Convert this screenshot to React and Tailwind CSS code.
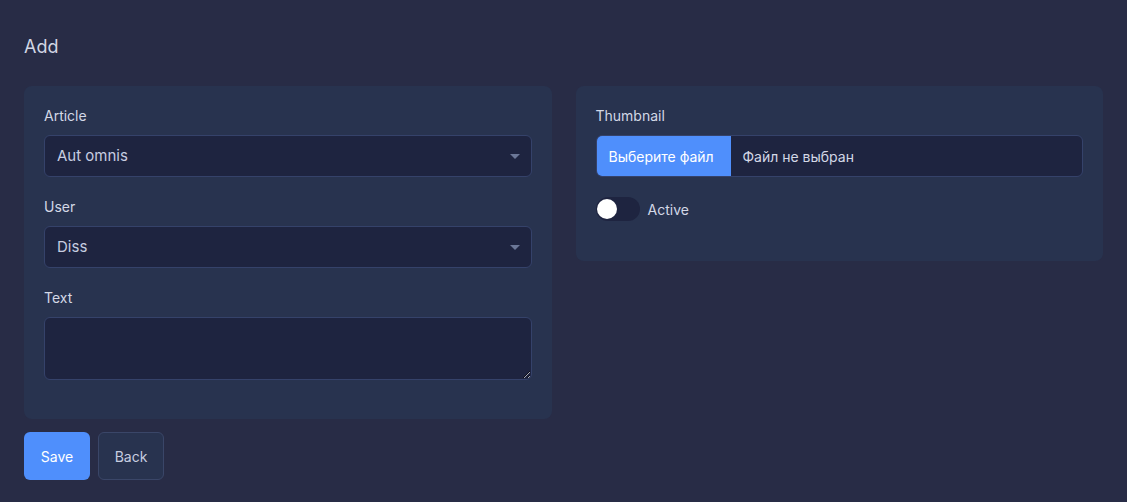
import React from 'react';

const Label = ({ children }) => (
    <label className="block text-[14px] leading-5 text-[#d3d8e6] mb-[9px]">{children}</label>
);

const Select = ({ value }) => (
    <div className="relative h-[42px] rounded-md border border-[#35426a] bg-[#1e2440] flex items-center px-3">
        <span className="text-[15px] text-[#c7cde0]">{value}</span>
        <span className="absolute right-[11px] top-[18px] w-0 h-0 border-l-[5px] border-r-[5px] border-t-[5px] border-l-transparent border-r-transparent border-t-[#6b7797]"></span>
    </div>
);

const App = () => {
    return (
        <div
            className="min-h-screen w-full bg-[#282c46] px-6 pt-[34px] pb-6"
            style={{ fontFamily: '"Inter", "Noto Sans", sans-serif' }}
        >
            <h1 className="text-[18px] leading-[26px] text-[#d1d6e4] mb-[26px]">Add</h1>

            <div className="grid grid-cols-2 gap-6 items-start">
                {/* Left card */}
                <div className="bg-[#28334f] rounded-lg p-5 pb-[19px]">
                    <div className="mb-5">
                        <Label>Article</Label>
                        <Select value="Aut omnis" />
                    </div>
                    <div className="mb-5">
                        <Label>User</Label>
                        <Select value="Diss" />
                    </div>
                    <div className="mb-5">
                        <Label>Text</Label>
                        <textarea className="block w-full h-[63px] rounded-md border border-[#35426a] bg-[#1e2440] text-[#c7cde0] outline-none px-3 py-2"></textarea>
                    </div>
                </div>

                {/* Right card */}
                <div className="bg-[#28334f] rounded-lg p-5">
                    <div className="mb-5">
                        <Label>Thumbnail</Label>
                        <div className="h-[42px] rounded-md border border-[#35426a] bg-[#1e2440] flex items-stretch overflow-hidden">
                            <span className="bg-[#4f8ffc] text-white text-[14px] px-3 flex items-center w-[134px]">Выберите файл</span>
                            <span className="text-[14px] text-[#d3d8e6] pl-3 flex items-center">Файл не выбран</span>
                        </div>
                    </div>
                    <div className="mb-5 flex items-center gap-2">
                        <div className="w-11 h-6 rounded-full bg-[#1e2440] relative">
                            <span className="absolute left-[1px] top-[2px] w-5 h-5 rounded-full bg-white"></span>
                        </div>
                        <span className="text-[14px] text-[#d3d8e6]">Active</span>
                    </div>
                </div>
            </div>

            <div className="flex gap-2 mt-[13px]">
                <button className="h-12 w-[66px] rounded-md bg-[#4f8ffc] text-white text-[14px]">Save</button>
                <button className="h-12 w-[66px] rounded-md bg-[#28334f] border border-[#3a4668] text-[#c7cde0] text-[14px]">Back</button>
            </div>
        </div>
    );
};

export default App;
